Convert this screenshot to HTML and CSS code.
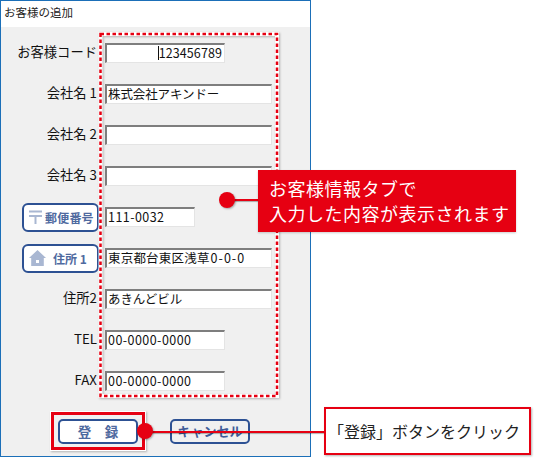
FILE: index.html
```html
<!DOCTYPE html>
<html lang="ja">
<head>
<meta charset="utf-8">
<title>お客様の追加</title>
<link rel="stylesheet" href="styles.css">
</head>
<body>
<div class="window">
  <div class="titlebar">お客様の追加</div>
  <div class="client">
    <form class="form">
      <div class="row"><span class="label">お客様コード</span><div class="field w-code right"><i class="caret"></i>123456789</div></div>
      <div class="row"><span class="label">会社名<span class="num">1</span></span><div class="field w-full"><span class="jp">株式会社アキンドー</span></div></div>
      <div class="row"><span class="label">会社名<span class="num">2</span></span><div class="field w-full"></div></div>
      <div class="row"><span class="label">会社名<span class="num">3</span></span><div class="field w-full"></div></div>
      <div class="row">
        <span class="pill">
          <svg class="pill-icon" width="15" height="16" viewBox="0 0 15 16"><path d="M1 2.500h13M1 7h13M7.500 7v8" fill="none" stroke="#a9b7d2" stroke-width="2"/></svg>
          <span class="pill-text tight">郵便番号</span>
        </span>
        <div class="field w-zip">111-0032</div>
      </div>
      <div class="row">
        <span class="pill">
          <svg class="pill-icon wide" width="17" height="16" viewBox="0 0 17 16"><path d="M8.500 0 17 8h-2.200v8H2.200V8H0z" fill="#a9b7d2"/><path d="M7 10h3v3H7z" fill="#fff"/></svg>
          <span class="pill-text">住所 1</span>
        </span>
        <div class="field w-full"><span class="jp kanji">東京都台東区浅草</span><span class="wide-num">0-0-0</span></div>
      </div>
      <div class="row"><span class="label">住所2</span><div class="field w-full"><span class="jp">あきんどビル</span></div></div>
      <div class="row"><span class="label">TEL</span><div class="field w-code">00-0000-0000</div></div>
      <div class="row"><span class="label">FAX</span><div class="field w-code">00-0000-0000</div></div>
    </form>
    <div class="actions">
      <span class="action">登　録</span>
      <span class="action cancel">キャンセル</span>
    </div>
  </div>
</div>

<svg class="dashed" width="534" height="458" viewBox="0 0 534 458">
  <rect class="dashed-under" x="100.500" y="34" width="176.500" height="362"/>
  <rect class="dashed-ink" x="100.500" y="34" width="176.500" height="362"/>
</svg>
<div class="redbox"></div>

<div class="line line-info"></div>
<div class="dot dot-info"></div>
<div class="callout-info">お客様情報タブで<br>入力した内容が表示されます</div>

<div class="line line-click"></div>
<div class="dot dot-click"></div>
<div class="callout-click">「登録」ボタンをクリック</div>
</body>
</html>
```
FILE: styles.css
```css
* { box-sizing: border-box; }
html, body { margin: 0; padding: 0; }
body {
  width: 534px;
  height: 458px;
  overflow: hidden;
  background: #fff;
  position: relative;
  font-family: "Noto Sans CJK JP", "Liberation Sans", sans-serif;
  color: #111;
}
.window {
  width: 311px;
  height: 457px;
  border: 1px solid #1b6fb8;
  display: flex;
  flex-direction: column;
}
.titlebar {
  height: 26px;
  padding: 1px 0 0 3px;
  font-size: 11.500px;
  line-height: 20px;
  background: #fff;
  color: #222;
}
.client {
  flex: 1;
  background: #f0f0f0;
  padding-top: 16px;
}
.form {
  display: flex;
  flex-direction: column;
  gap: 21px;
}
.row {
  display: flex;
  align-items: center;
  height: 20px;
}
.label {
  width: 96px;
  height: 20px;
  margin-top: -2px;
  margin-right: 8px;
  line-height: 20px;
  text-align: right;
  font-size: 13.300px;
  white-space: nowrap;
  flex: none;
}
.num { margin-left: 3px; }
.field {
  height: 20px;
  background: #fff;
  border-top: 2px solid #7e7e7e;
  border-left: 2px solid #7e7e7e;
  border-right: 1px solid #e4e4e4;
  border-bottom: 1px solid #e4e4e4;
  font-size: 12.500px;
  line-height: 16px;
  padding-left: 1px;
  white-space: nowrap;
  letter-spacing: 0.45px;
  color: #111;
}
.jp { font-size: 12.500px; letter-spacing: -0.1px; margin-right: 1px; }
.kanji { letter-spacing: 0.2px; }
.wide-num { letter-spacing: 1px; }
.w-full { width: 167px; }
.w-code { width: 120px; }
.w-zip { width: 90px; }
.right {
  display: flex;
  justify-content: flex-end;
  padding-right: 2px;
  letter-spacing: 0.1px;
}
.caret {
  width: 1px;
  height: 14px;
  margin-top: 1px;
  background: #111;
}
.pill {
  width: 77px;
  height: 29px;
  margin: 0 6px 0 21px;
  flex: none;
  background: #fff;
  border: 2px solid #2d5193;
  border-radius: 6px;
  display: flex;
  align-items: center;
  color: #4f6a9f;
  font-weight: 700;
}
.pill-icon { margin-left: 4px; flex: none; }
.pill-icon.wide { margin-left: 5px; }
.pill-text { font-size: 12px; margin-left: 2px; white-space: nowrap; }
.pill-text.tight { letter-spacing: 0.2px; }
.pill-icon.wide + .pill-text { margin-left: 7px; }
.actions {
  display: flex;
  gap: 32px;
  margin: 28px 0 0 57px;
}
.action {
  width: 80px;
  height: 25px;
  background: #fff;
  border: 2px solid #2d5193;
  border-radius: 5px;
  color: #4f6a9f;
  font-size: 13.500px;
  font-weight: 700;
  line-height: 20px;
  text-align: center;
  white-space: nowrap;
}
.cancel {
  background: transparent;
  font-size: 13px;
  color: #3f5c98;
}
.dashed {
  position: absolute;
  left: 0;
  top: 0;
  pointer-events: none;
  filter: drop-shadow(1px 1px 1px rgba(0,0,0,.25));
}
.dashed-under, .dashed-ink { fill: none; }
.dashed-under { stroke: #fff; stroke-width: 4; }
.dashed-ink { stroke: #e60012; stroke-width: 2.500; stroke-dasharray: 3.500 2.500; }
.redbox {
  position: absolute;
  left: 51px;
  top: 412px;
  width: 94px;
  height: 38px;
  border: 3px solid #e60012;
  box-shadow: 0 0 0 1px #fff, 1px 1px 2px 1px rgba(0,0,0,.25);
}
.line {
  position: absolute;
  height: 2px;
  background: #e60012;
  box-shadow: 0 1px 1px rgba(0,0,0,.3);
}
.line-info { left: 227px; top: 199px; width: 32px; }
.line-click { left: 145px; top: 431px; width: 184px; }
.dot {
  position: absolute;
  width: 16px;
  height: 16px;
  border-radius: 50%;
  background: #e60012;
  box-shadow: 1px 1px 2px rgba(0,0,0,.3);
}
.dot-info { left: 219px; top: 192px; }
.dot-click { left: 137px; top: 423px; }
.callout-info {
  position: absolute;
  left: 258px;
  top: 170px;
  width: 258px;
  height: 62px;
  padding: 6px 0 0 11px;
  background: #e60012;
  color: #fff;
  font-size: 18px;
  line-height: 25px;
  letter-spacing: 0.5px;
  white-space: nowrap;
  box-shadow: 0 1px 2px rgba(0,0,0,.2);
}
.callout-click {
  position: absolute;
  left: 324px;
  top: 407px;
  width: 207px;
  height: 48px;
  padding-left: 2px;
  background: #fff;
  border: 2px solid #e60012;
  font-size: 16px;
  line-height: 44px;
  color: #222;
  white-space: nowrap;
  box-shadow: 1px 1px 2px rgba(0,0,0,.3);
}
```
